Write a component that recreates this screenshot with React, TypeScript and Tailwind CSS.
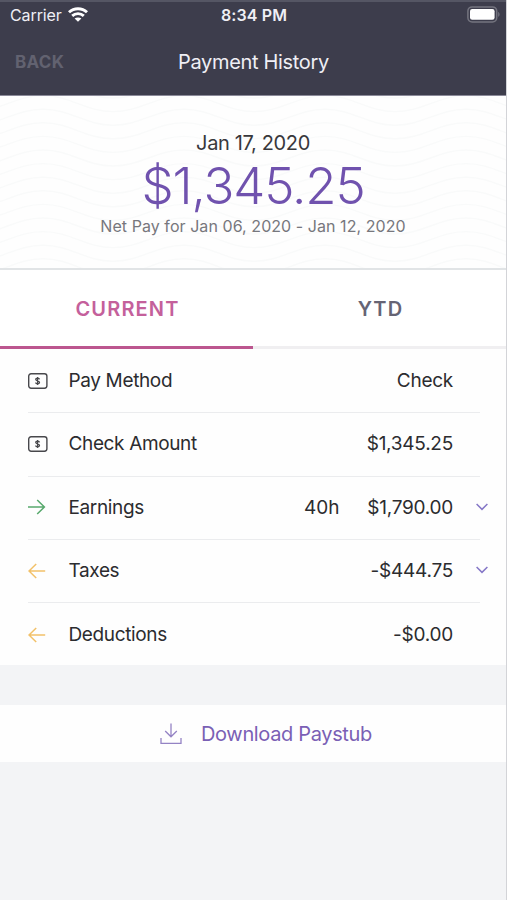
import type { ReactNode } from "react";

function Wifi() {
  return (
    <svg width="20" height="15" viewBox="0 0 20 15" fill="none" stroke="#fff" strokeWidth="2.9">
      <path d="M1 5.2C6 .5 14 .5 19 5.2" />
      <path d="M4.2 8.9c3.3-3.1 8.3-3.1 11.6 0" />
      <path d="M10 14.8 6.6 11.6c1.8-1.6 5-1.6 6.8 0Z" fill="#fff" stroke="none" />
    </svg>
  );
}

function Battery() {
  return (
    <svg width="34" height="17" viewBox="0 0 34 17" fill="none">
      <rect x=".9" y=".9" width="28.8" height="15" rx="4.2" stroke="#74747f" strokeWidth="1.5" />
      <rect x="3" y="3" width="24.6" height="10.8" rx="2.2" fill="#fff" />
      <path d="M31.2 6v4.8c1.8-.5 1.8-4.3 0-4.8Z" fill="#74747f" />
    </svg>
  );
}

function Money() {
  return (
    <svg width="20" height="16" viewBox="0 0 20 16" fill="none" stroke="#48484c">
      <rect x=".7" y=".8" width="18.2" height="14.4" rx="2.4" strokeWidth="1.4" />
      <path d="M11.5 6.3c-.2-1.7-3.8-1.7-3.8 0 0 2 3.8 1.3 3.8 3.3 0 1.7-3.8 1.7-3.8-.1M9.6 3.9v8.2" strokeWidth="1.3" />
    </svg>
  );
}

function ArrowRight() {
  return (
    <svg width="18" height="16" viewBox="0 0 18 16" fill="none" stroke="#58a96d" strokeWidth="1.5">
      <path d="M0 8h16.5M9.2 1l7.2 7-7.2 7" />
    </svg>
  );
}

function ArrowLeft() {
  return (
    <svg width="18" height="16" viewBox="0 0 18 16" fill="none" stroke="#f2c169" strokeWidth="1.5">
      <path d="M17.2 8H1M8.2 1 1 8l7.2 7" />
    </svg>
  );
}

function Chevron() {
  return (
    <svg width="12" height="8" viewBox="0 0 12 8" fill="none" stroke="#8577c7" strokeWidth="1.5">
      <path d="m.6 1 5.4 5.4L11.4 1" />
    </svg>
  );
}

function Download() {
  return (
    <svg width="22" height="22" viewBox="0 0 22 22" fill="none" stroke="#9483c4" strokeWidth="1.3">
      <path d="M11 .5v13M5.2 8l5.8 5.8L16.8 8M1 15v5.3h20V15" />
    </svg>
  );
}

const waveOffsets = Array.from({ length: 15 }, (_, i) => i * 13.6 - 14);

function Waves() {
  return (
    <svg className="absolute inset-0 h-full w-full" fill="none" stroke="#f9fafa" strokeWidth="1.4">
      {waveOffsets.map((y) => (
        <path
          key={y}
          transform={`translate(-98 ${y})`}
          d="M0 0c28 0 42 16 70 16s43-16 71-16 42 16 70 16 43-16 71-16 42 16 70 16 43-16 71-16 42 16 70 16 43-16 71-16 42 16 70 16"
        />
      ))}
    </svg>
  );
}

type RowProps = { icon: ReactNode; label: string; hours?: string; value: string; open?: boolean; last?: boolean };

function Row({ icon, label, hours, value, open, last }: RowProps) {
  return (
    <div className="flex h-[63.35px] items-center pl-[28px]">
      <div className={`flex h-full w-[452px] shrink-0 items-center ${last ? "" : "border-b border-[#ebecee]"}`}>
        <span className="flex w-[40.5px] pb-px">{icon}</span>
        <span className="flex-1 tracking-[-0.36px]">{label}</span>
        {hours && <span className="mr-[28px] tracking-[-0.1px]">{hours}</span>}
        <span className="pr-[27px] tracking-[-0.25px]">{value}</span>
      </div>
      {open && (
        <span className="-ml-[4px] flex pb-[3px]">
          <Chevron />
        </span>
      )}
    </div>
  );
}

export default function App() {
  return (
    <div className="flex h-[900px] w-[507px] flex-col overflow-hidden border-r border-[#d3d4d8] bg-[#f3f4f6] font-['Inter','Liberation_Sans',sans-serif] text-[#2c2c2f]">
      <header className="h-[96px] shrink-0 border-t-2 border-b border-t-[#555664] border-b-[#8b8a99] bg-[#3d3d4c] text-[#efeff5]">
        <div className="grid h-[25px] grid-cols-[1fr_auto_1fr] items-center pl-[10px] pr-[5px]">
          <div className="flex items-center gap-[6px] text-[16px] tracking-[-0.1px]">
            Carrier <Wifi />
          </div>
          <div className="mr-[3px] text-[16px] font-semibold tracking-[0.1px]">8:34 PM</div>
          <div className="flex justify-end"><Battery /></div>
        </div>
        <div className="grid h-[70px] grid-cols-[1fr_auto_1fr] items-center pl-[15px] pr-[14px]">
          <div className="pt-[2px] text-[17px] font-bold tracking-[0.3px] text-[#626270]">BACK</div>
          <div className="text-[20px] tracking-[-0.33px]">Payment History</div>
        </div>
      </header>

      <section className="relative h-[174px] shrink-0 border-b-2 border-[#e1e4e6] bg-[#fefefe]">
        <Waves />
        <div className="relative flex flex-col items-center pt-[33px] whitespace-nowrap">
          <div className="text-[20px] leading-[28px] tracking-[-0.35px] text-[#38383c]">Jan 17, 2020</div>
          <div className="text-[51px] leading-[57px] font-light tracking-[-1.1px] text-[#7052ae]">$1,345.25</div>
          <div className="text-[16px] leading-[25px] tracking-[0.06px] text-[#77777d]">
            Net Pay for Jan 06, 2020 - Jan 12, 2020
          </div>
        </div>
      </section>

      <nav className="grid h-[79px] shrink-0 grid-cols-2 bg-white text-[20px] font-semibold tracking-[1.15px]">
        <div className="flex items-center justify-center border-b-[3px] border-[#bc568f] pt-px pl-[2px] text-[#c4609b]">CURRENT</div>
        <div className="flex items-center justify-center border-b-[3px] border-[#f0eff1] pt-px pl-[2px] text-[#666474]">YTD</div>
      </nav>

      <main className="h-[316px] shrink-0 bg-[#fefefe] pt-px text-[19px]">
        <Row icon={<Money />} label="Pay Method" value="Check" />
        <Row icon={<Money />} label="Check Amount" value="$1,345.25" />
        <Row icon={<ArrowRight />} label="Earnings" hours="40h" value="$1,790.00" open />
        <Row icon={<ArrowLeft />} label="Taxes" value="-$444.75" open />
        <Row icon={<ArrowLeft />} label="Deductions" value="-$0.00" last />
      </main>

      <button className="mt-[40px] flex h-[57px] shrink-0 items-center gap-[19px] bg-[#fefefe] pl-[160px] text-[20px] tracking-[-0.35px] text-[#7a60b5]">
        <Download />
        Download Paystub
      </button>
    </div>
  );
}
